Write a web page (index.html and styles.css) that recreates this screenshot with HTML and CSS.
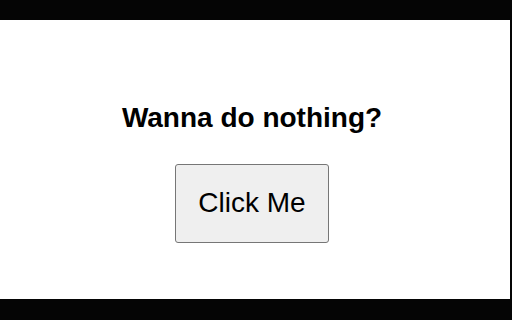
FILE: index.html
```html
<!DOCTYPE html>
<html>
<head>
<meta charset="utf-8">
<link rel="stylesheet" href="styles.css">
</head>
<body>
<div class="frame">
  <div class="bar"></div>
  <div class="screen">
    <main class="content">
      <h1 class="title">Wanna do nothing?</h1>
      <button class="btn" type="button">Click Me</button>
    </main>
  </div>
  <div class="bar bottom"></div>
</div>
</body>
</html>
```
FILE: styles.css
```css
html, body {
  margin: 0;
  padding: 0;
  background: #050505;
}
.frame {
  width: 512px;
  height: 320px;
  display: flex;
  flex-direction: column;
}
.bar {
  height: 20px;
  background: #050505;
}
.bar.bottom {
  height: 21px;
}
.screen {
  height: 279px;
  width: 510px;
  background: #ffffff;
  box-sizing: border-box;
  padding-right: 6px;
}
.content {
  display: flex;
  flex-direction: column;
  align-items: center;
  padding-top: 82px;
  gap: 30px;
  font-family: "Liberation Sans", Arial, sans-serif;
}
.title {
  margin: 0;
  font-size: 28px;
  font-weight: bold;
  line-height: normal;
  color: #000;
}
.btn {
  margin: 0;
  font-family: "Liberation Sans", Arial, sans-serif;
  font-size: 28px;
  line-height: normal;
  color: #000;
  background: #efefef;
  border: 1px solid #767676;
  border-radius: 3px;
  padding: 22px 22px 23px;
}
```
